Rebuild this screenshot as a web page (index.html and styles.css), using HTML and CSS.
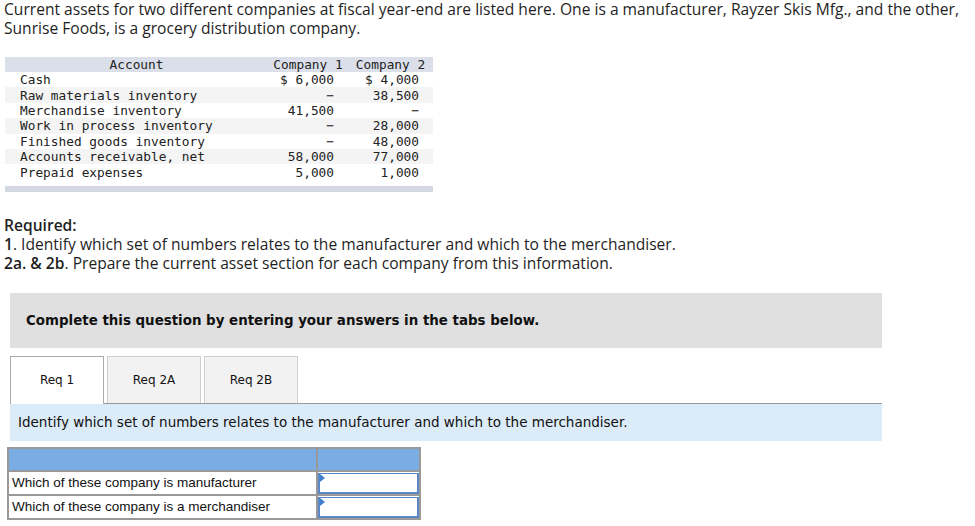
FILE: index.html
```html
<!DOCTYPE html>
<html>
<head>
<meta charset="utf-8">
<link rel="stylesheet" href="styles.css">
</head>
<body>
<div class="page">
  <p class="intro">Current assets for two different companies at fiscal year-end are listed here. One is a manufacturer, Rayzer Skis Mfg., and the other, Sunrise Foods, is a grocery distribution company.</p>

  <div class="data">
    <table class="accounts">
      <thead>
        <tr><th class="acc">Account</th><th>Company 1</th><th>Company 2</th></tr>
      </thead>
      <tbody>
        <tr><td>Cash</td><td class="num">$ 6,000</td><td class="num">$ 4,000</td></tr>
        <tr class="alt"><td>Raw materials inventory</td><td class="num">&minus;</td><td class="num">38,500</td></tr>
        <tr><td>Merchandise inventory</td><td class="num">41,500</td><td class="num">&minus;</td></tr>
        <tr class="alt"><td>Work in process inventory</td><td class="num">&minus;</td><td class="num">28,000</td></tr>
        <tr><td>Finished goods inventory</td><td class="num">&minus;</td><td class="num">48,000</td></tr>
        <tr class="alt"><td>Accounts receivable, net</td><td class="num">58,000</td><td class="num">77,000</td></tr>
        <tr><td>Prepaid expenses</td><td class="num">5,000</td><td class="num">1,000</td></tr>
      </tbody>
    </table>
    <div class="data-foot"></div>
  </div>

  <div class="required">
    <div class="req-title">Required:</div>
    <div><b>1</b>. Identify which set of numbers relates to the manufacturer and which to the merchandiser.</div>
    <div><b>2a. &amp; 2b</b>. Prepare the current asset section for each company from this information.</div>
  </div>

  <div class="complete">Complete this question by entering your answers in the tabs below.</div>

  <div class="tabs">
    <div class="tab active">Req 1</div>
    <div class="tab">Req 2A</div>
    <div class="tab">Req 2B</div>
  </div>
  <div class="panel">Identify which set of numbers relates to the manufacturer and which to the merchandiser.</div>

  <table class="answer">
    <tr class="head"><td class="q"></td><td class="a"></td></tr>
    <tr><td class="q">Which of these company is manufacturer</td><td class="a"><div class="input"><span class="flag"></span></div></td></tr>
    <tr><td class="q">Which of these company is a merchandiser</td><td class="a"><div class="input"><span class="flag"></span></div></td></tr>
  </table>
</div>
</body>
</html>
```

FILE: styles.css
```css
* { box-sizing: border-box; }
html, body { margin: 0; padding: 0; background: #fff; }
body { color: #222; }
.page { padding: 0 0 0 4px; }

.intro {
  margin: 0;
  padding-top: 0;
  font-family: "Open Sans", "Liberation Sans", sans-serif;
  font-size: 15.6px;
  line-height: 19px;
  color: #1f1f1f;
  width: 968px;
}

.data { margin-top: 19px; width: 428px; margin-left: 1px; }
.accounts {
  border-collapse: collapse;
  width: 428px;
  font-family: "DejaVu Sans Mono", "Liberation Mono", monospace;
  font-size: 12.8px;
  color: #222;
}
.accounts th {
  background: #dadfe9;
  font-weight: normal;
  height: 15px;
  line-height: 15px;
  padding: 0;
  text-align: center;
  width: 80px;
}
.accounts th.acc { width: 263px; }
.accounts th:last-child { width: 85px; }
.accounts td {
  height: 15.4px;
  line-height: 15px;
  padding: 0 0 0 15px;
  white-space: nowrap;
}
.accounts td.num { text-align: right; padding: 0 14px 0 0; }
.accounts tr.alt td { background: #f4f4f4; }
.data-foot { height: 6px; background: #d3d8e2; margin-top: 6px; }

.required {
  margin-top: 24px;
  font-family: "Open Sans", "Liberation Sans", sans-serif;
  font-size: 15.6px;
  line-height: 19px;
  color: #1f1f1f;
}
.required b { font-weight: 600; }
.req-title { font-weight: 600; }

.complete {
  margin: 20px 0 0 6px;
  width: 872px;
  height: 55px;
  background: #e0e0e0;
  padding: 0 0 0 16px;
  display: flex;
  align-items: center;
  font-family: "DejaVu Sans", Verdana, sans-serif;
  font-weight: bold;
  font-size: 13.4px;
  color: #111;
}

.tabs {
  margin: 8px 0 0 6px;
  display: flex;
  gap: 3px;
  width: 872px;
  border-bottom: 1px solid #999;
  height: 48px;
}
.tab {
  width: 94px;
  height: 47px;
  background: #f2f2f2;
  border: 1px solid #cfcfcf;
  border-bottom: none;
  display: flex;
  align-items: center;
  justify-content: center;
  font-family: "DejaVu Sans", Verdana, sans-serif;
  font-size: 12px;
  color: #111;
}
.tab.active {
  background: #fff;
  border-color: #aaa;
  height: 48px;
  margin-bottom: -1px;
}
.panel {
  margin-left: 6px;
  width: 872px;
  height: 37px;
  background: #dcebf8;
  padding: 0 0 0 8px;
  display: flex;
  align-items: center;
  font-family: "DejaVu Sans", Verdana, sans-serif;
  font-size: 13.5px;
  color: #111;
}

.answer {
  margin: 6px 0 0 3px;
  border-collapse: collapse;
  font-family: "Liberation Sans", Arial, sans-serif;
  font-size: 13.5px;
  color: #111;
}
.answer td {
  border: 2px solid #999;
  padding: 0 3px;
  height: 24px;
}
.answer td.q { width: 309px; }
.answer td.a { width: 103px; padding: 0; }
.answer tr.head td { background: #7aade4; height: 23px; }
.input {
  position: relative;
  height: 21px;
  margin: 1px 0 0 0;
  border: 2px solid #5a87c5;
  border-top-width: 1px;
  background: #fff;
}
.flag {
  position: absolute;
  left: 0;
  top: 0;
  width: 0;
  height: 0;
  border-top: 4px solid transparent;
  border-bottom: 4px solid transparent;
  border-left: 5px solid #3f7fd0;
}
```
